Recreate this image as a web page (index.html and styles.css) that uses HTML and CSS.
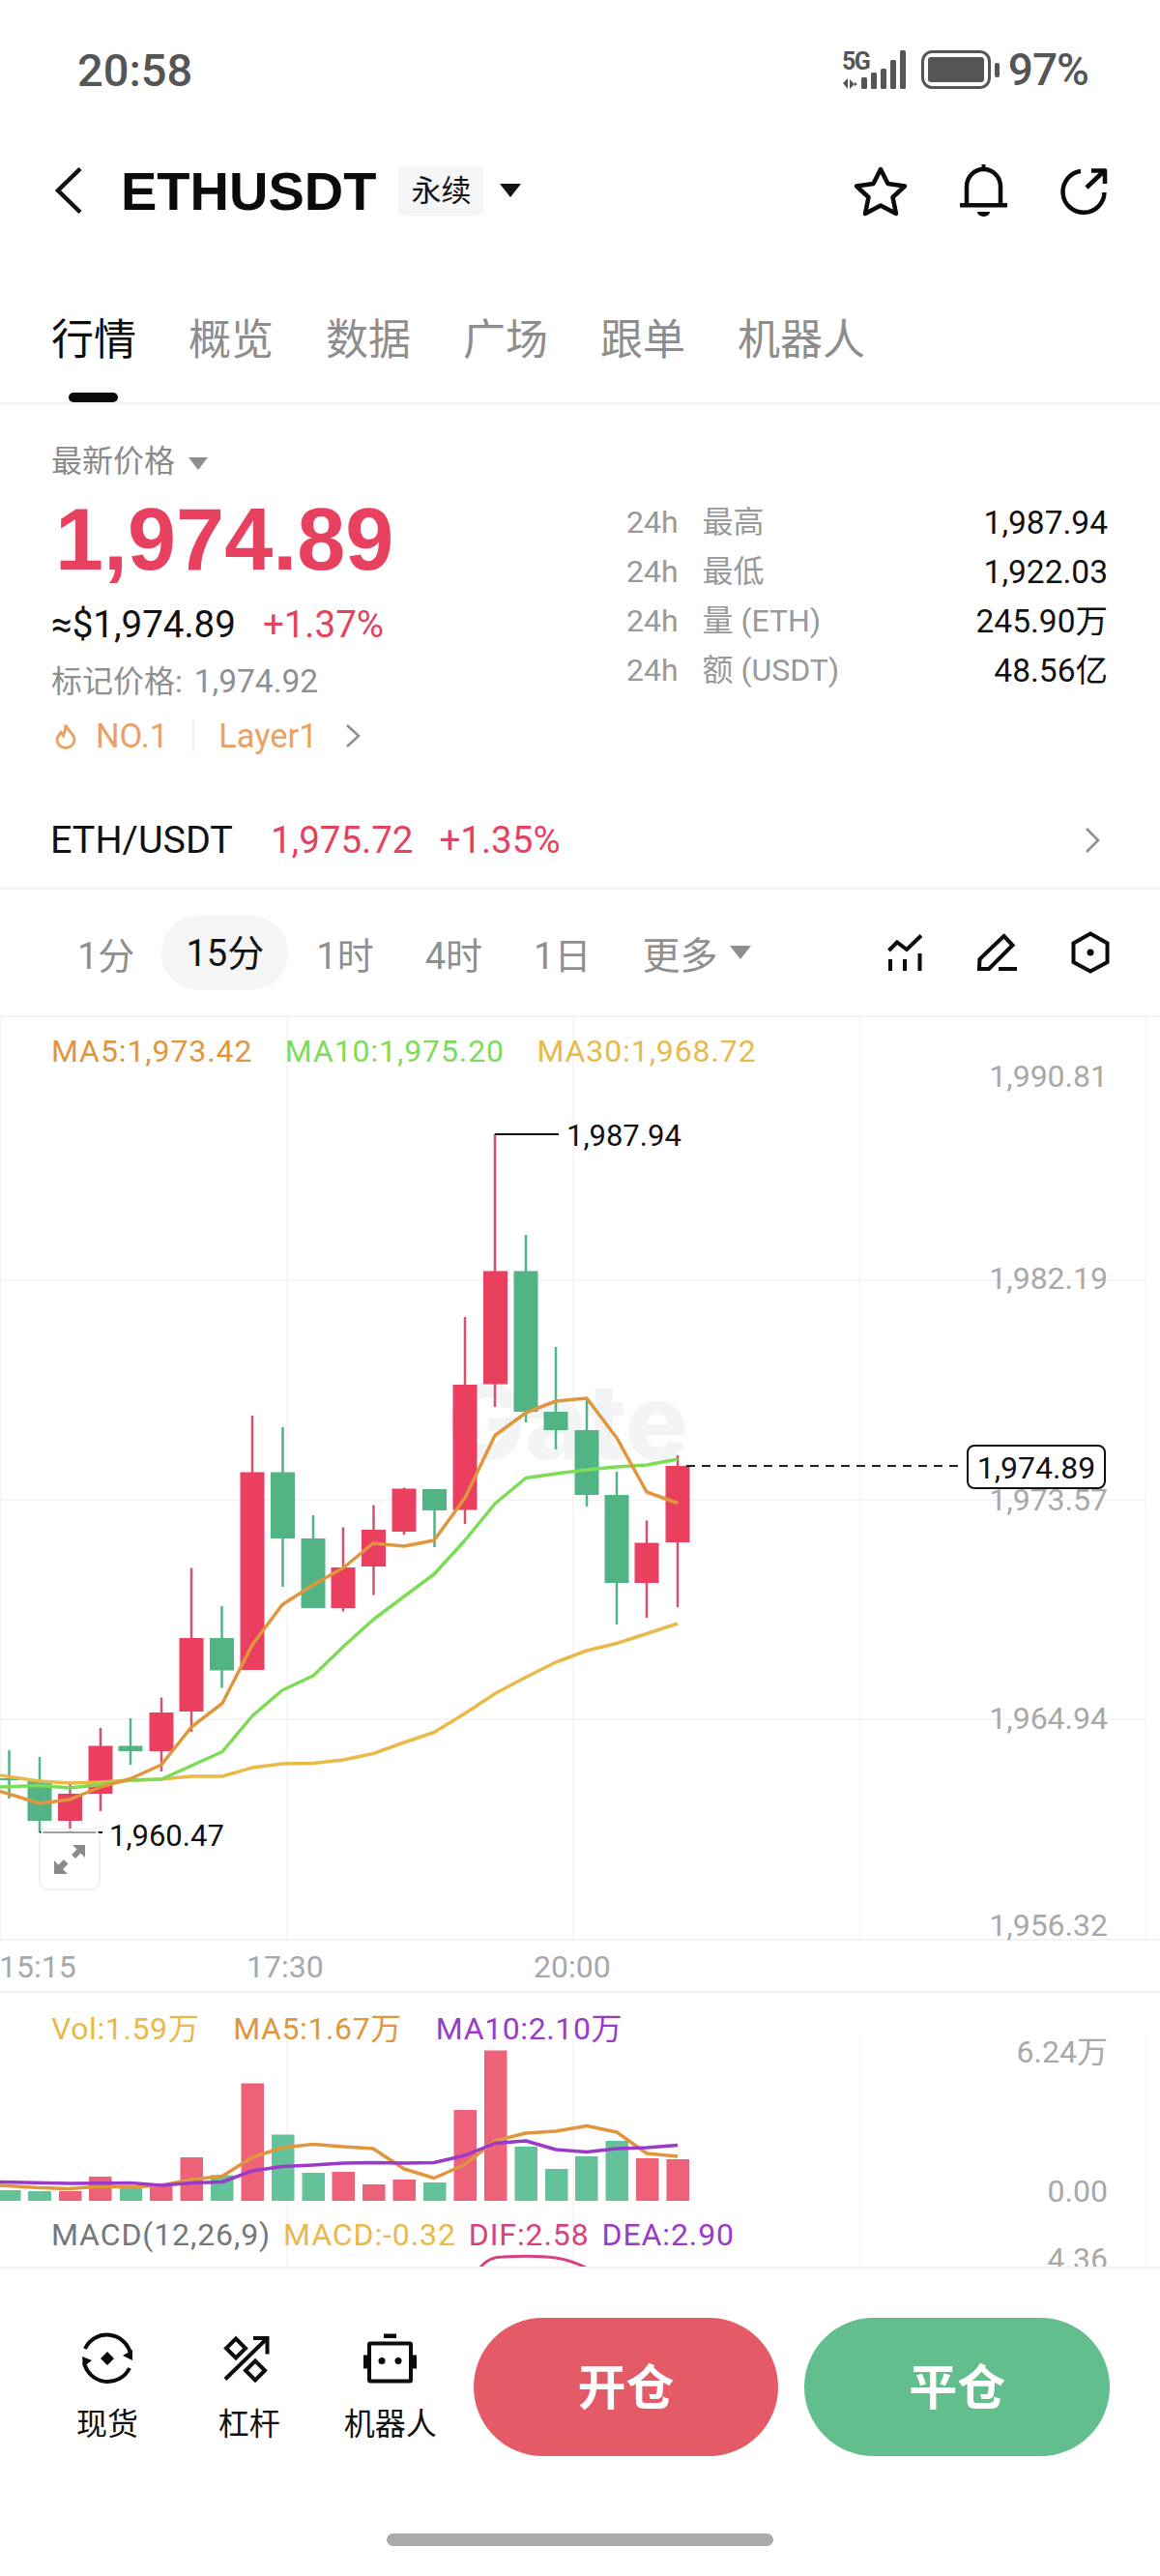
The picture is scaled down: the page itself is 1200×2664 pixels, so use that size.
FILE: index.html
```html
<!DOCTYPE html>
<html lang="zh-CN">
<head>
  <meta charset="UTF-8">
  <title>ETHUSDT 永续</title>
  <meta name="viewport" content="width=device-width, initial-scale=1.0">
  <link rel="stylesheet" href="styles.css">
</head>
<body>

<div class="status-bar">
  <span class="clock">20:58</span>
  <div class="status-icons">
    <svg class="signal" width="66" height="40" viewBox="0 0 66 40">
      <text class="signal-text" x="0" y="20">5G</text>
      <path d="M1 34l5-5v11M8 30v10l5-5zM13 33l3 2-3 2z"/>
      <rect x="20" y="28" width="6" height="12" rx="1.5"/>
      <rect x="30" y="23" width="6" height="17" rx="1.5"/>
      <rect x="40" y="19" width="6" height="21" rx="1.5"/>
      <rect x="50" y="10" width="6" height="30" rx="1.5"/>
      <rect x="60" y="0" width="6" height="40" rx="1.5"/>
    </svg>
    <svg class="battery" width="81" height="40" viewBox="0 0 81 40">
      <rect class="battery-shell" x="1.5" y="1.5" width="69" height="37" rx="10"/>
      <rect x="7" y="7" width="58" height="26" rx="3"/>
      <rect x="76" y="13" width="5" height="15" rx="2"/>
    </svg>
    <span class="battery-pct">97%</span>
  </div>
</div>

<div class="top-bar">
  <svg class="back" width="28" height="48" viewBox="0 0 28 48"><path d="M26 1.500L3 24l23 22.500"/></svg>
  <span class="symbol">ETHUSDT</span>
  <span class="badge">永续</span>
  <span class="caret caret-dark"></span>
  <div class="top-actions">
    <svg class="line-icon" width="54" height="51" viewBox="0 0 54 51"><path d="M27 3l7.500 15L52 20.500 39.500 32 43 49 27 40.500 11 49l3.500-17L2 20.500 19.500 18z"/></svg>
    <svg class="line-icon bell" width="49" height="54" viewBox="0 0 49 54">
      <path d="M7 42V23a17.500 18 0 0 1 35 0v19"/>
      <rect class="solid" x="0" y="40" width="49" height="4.500"/>
      <rect class="solid" x="22.500" y="0" width="4" height="6"/>
      <path class="solid" d="M18 49h13a6.500 5 0 0 1-13 0z"/>
    </svg>
    <svg class="line-icon share" width="48" height="47" viewBox="0 0 48 47">
      <path d="M21 3A21.500 21.500 0 1 0 45.500 25"/>
      <path d="M27 20L45 3M32 2.500h14V16"/>
    </svg>
  </div>
</div>

<div class="tabs">
  <span class="tab tab-active">行情</span>
  <span class="tab">概览</span>
  <span class="tab">数据</span>
  <span class="tab">广场</span>
  <span class="tab">跟单</span>
  <span class="tab">机器人</span>
  <span class="tab-marker"></span>
</div>

<div class="price-panel">
  <div class="price-left">
    <div class="price-label">最新价格 <span class="caret caret-grey"></span></div>
    <div class="last-price">1,974.89</div>
    <div class="fiat-row"><span class="fiat">≈$1,974.89</span><span class="red">+1.37%</span></div>
    <div class="mark-price">标记价格:<span class="mark-value">1,974.92</span></div>
    <div class="tag-row">
      <svg class="flame" width="22" height="27" viewBox="0 0 22 27"><path d="M11 1.500c1 5.500 9 9 9 15.500a9 8.500 0 0 1-18 0c0-3.500 2.500-4.500 4-7.500 1 1 2 2 2.500 3 1.500-3 2.500-6.500 2.500-11z"/></svg>
      <span>NO.1</span>
      <span class="tag-divider"></span>
      <span>Layer1</span>
      <svg class="chevron tag-chevron" width="16" height="24" viewBox="0 0 16 24"><path d="M2 1l12 11L2 23"/></svg>
    </div>
  </div>
  <div class="stats">
    <div class="stat"><span class="stat-range">24h</span><span class="stat-name">最高</span><span class="stat-value">1,987.94</span></div>
    <div class="stat"><span class="stat-range">24h</span><span class="stat-name">最低</span><span class="stat-value">1,922.03</span></div>
    <div class="stat"><span class="stat-range">24h</span><span class="stat-name">量 (ETH)</span><span class="stat-value">245.90万</span></div>
    <div class="stat"><span class="stat-range">24h</span><span class="stat-name">额 (USDT)</span><span class="stat-value">48.56亿</span></div>
  </div>
</div>

<div class="pair-row">
  <span class="pair-name">ETH/USDT</span>
  <span class="red pair-price">1,975.72</span>
  <span class="red pair-change">+1.35%</span>
  <svg class="chevron pair-chevron" width="16" height="26" viewBox="0 0 16 26"><path d="M2 1l12 12L2 25"/></svg>
</div>

<div class="period-row">
  <span class="period">1分</span>
  <span class="period period-active">15分</span>
  <span class="period">1时</span>
  <span class="period">4时</span>
  <span class="period">1日</span>
  <span class="period period-more">更多<span class="caret caret-grey"></span></span>
  <div class="period-tools">
    <svg class="tool-icon" width="36" height="38" viewBox="0 0 36 38"><path d="M1.500 17L10 8.500 20 16 35 1.500M3 26v12M18 26v12M33.500 20v18"/></svg>
    <svg class="tool-icon" width="41" height="38" viewBox="0 0 41 38"><path d="M27.500 2l9 9.500L12 36H2l.5-10zM22 36h19"/></svg>
    <svg class="tool-icon" width="38" height="42" viewBox="0 0 38 42"><path d="M19 1.500l17.500 10V31L19 40.500 1.500 31V11.500z"/><circle class="solid" cx="19" cy="21" r="3.500"/></svg>
  </div>
</div>

<!-- main candle pane, svg coordinates are page coordinates -->
<div class="pane pane-main">
  <svg class="pane-svg" width="1200" height="953" viewBox="0 1053 1200 953">
    <g class="grid">
      <path d="M0 1325H1185M0 1552.500H1185M0 1779H1185M.5 1053V2006M297 1053V2006M593 1053V2006M889.500 1053V2006M1185.500 1053V2006"/>
    </g>
    <text class="watermark" x="462" y="1510">Gate</text>

    <g class="fall">
      <path class="wick" d="M9.500 1811V1861M41 1818V1896M135 1778V1826M229.500 1662V1746.500M292.500 1477V1642M324 1568V1600M449.500 1541V1601M544 1278V1472M575 1394V1500M607 1446V1559M638 1523V1681"/>
      <rect x="0" y="1840" width="22" height="2"/>
      <rect x="28.500" y="1843" width="25" height="41"/>
      <rect x="122.500" y="1806.500" width="25" height="5.500"/>
      <rect x="217" y="1695" width="25" height="33.500"/>
      <rect x="280" y="1523.500" width="25" height="68.500"/>
      <rect x="311.500" y="1592" width="25" height="72"/>
      <rect x="437" y="1541" width="25" height="22"/>
      <rect x="531.500" y="1315.500" width="25" height="145.500"/>
      <rect x="562.500" y="1461" width="25" height="19"/>
      <rect x="594.500" y="1480" width="25" height="67"/>
      <rect x="625.500" y="1547" width="25" height="91"/>
    </g>
    <g class="rise">
      <path class="wick" d="M72.500 1846V1895M104 1788V1874M167 1756.500V1833M198 1622.500V1792M261 1465V1728M355 1580.500V1667.500M386.500 1557.500V1650.500M418 1539.500V1588M481 1363V1577M512 1173.500V1456M669 1573.500V1674M701 1506V1663"/>
      <rect x="60" y="1856" width="25" height="28"/>
      <rect x="91.500" y="1806.500" width="25" height="49.500"/>
      <rect x="154.500" y="1772" width="25" height="40"/>
      <rect x="185.500" y="1695" width="25" height="76"/>
      <rect x="248.500" y="1523.500" width="25" height="204.500"/>
      <rect x="342.500" y="1622" width="25" height="42"/>
      <rect x="374" y="1583" width="25" height="38"/>
      <rect x="405.500" y="1540.500" width="25" height="44.500"/>
      <rect x="468.500" y="1433" width="25" height="129.500"/>
      <rect x="500" y="1315.500" width="25" height="117"/>
      <rect x="656.500" y="1596.500" width="25" height="41.500"/>
      <rect x="688.500" y="1517" width="25" height="79"/>
    </g>

    <polyline class="ma ma30" points="0,1837 41,1843 72,1845 104,1844 135,1842 167,1841 198,1838 230,1838 261,1829 292,1825 324,1824.500 355,1821 386,1814.500 418,1803 449,1792.500 481,1773 512,1752.500 544,1735.500 575,1720 607,1708 638,1700.500 669,1690.500 701,1680"/>
    <polyline class="ma ma10" points="0,1849 41,1847.500 72,1850 104,1846.500 135,1842 167,1841 198,1827 230,1812.500 261,1775.500 292,1749 324,1734 355,1704 386,1676 418,1652 449,1629 481,1594 512,1556 544,1529.500 575,1525 607,1521 638,1518 669,1516 701,1510"/>
    <polyline class="ma ma5" points="0,1853.500 41,1866 72,1862 104,1849 135,1840.500 167,1826 198,1787 230,1762.500 261,1702 292,1660.500 324,1640 355,1622.500 386,1597 418,1600 449,1594 481,1550 512,1485.500 544,1462 575,1450 607,1447 638,1488 669,1544 701,1555.500"/>

    <path class="marker-line" d="M512 1174H578M41 1896H106"/>
    <text class="mark-text" x="586" y="1186">1,987.94</text>
    <text class="mark-text" x="113" y="1910">1,960.47</text>

    <path class="last-line" d="M710 1517H997"/>

    <g class="axis">
      <text x="1146" y="1125">1,990.81</text>
      <text x="1146" y="1334">1,982.19</text>
      <text x="1146" y="1563">1,973.57</text>
      <text x="1146" y="1789">1,964.94</text>
      <text x="1146" y="2003">1,956.32</text>
    </g>
  </svg>

  <div class="legend legend-ma">
    <span class="c-ma5">MA5:1,973.42</span>
    <span class="c-ma10">MA10:1,975.20</span>
    <span class="c-ma30">MA30:1,968.72</span>
  </div>

  <span class="last-tag">1,974.89</span>

  <span class="expand">
    <svg width="32" height="30" viewBox="0 0 32 30"><path d="M19 0h13v13l-4.500-4.500L22 14l-4-4 5.500-5.500zM0 30V16l4.500 4.500L10 15l4.500 4.500L9 25l5 5z"/></svg>
  </span>
</div>

<div class="time-axis">
  <svg width="1200" height="52" viewBox="0 0 1200 52">
    <g class="axis axis-time">
      <text x="-1" y="38">15:15</text>
      <text x="255" y="38">17:30</text>
      <text x="552" y="38">20:00</text>
    </g>
  </svg>
</div>

<!-- volume and macd panes -->
<div class="pane pane-lower">
  <svg class="pane-svg" width="1200" height="283" viewBox="0 2062 1200 283">
    <g class="grid">
      <path d="M297 2110V2345M593 2110V2345M889.500 2110V2345M1185.500 2110V2345"/>
    </g>
    <g class="vol-fall">
      <rect x="-3" y="2266" width="24.500" height="11"/>
      <rect x="29" y="2267" width="24" height="10"/>
      <rect x="124" y="2261" width="23" height="16"/>
      <rect x="218" y="2250.500" width="23.500" height="26.500"/>
      <rect x="281" y="2208.500" width="23.500" height="68.500"/>
      <rect x="312.500" y="2248" width="23.500" height="29"/>
      <rect x="438" y="2258" width="23.500" height="19"/>
      <rect x="532.500" y="2221" width="23.500" height="56"/>
      <rect x="564" y="2244" width="23.500" height="33"/>
      <rect x="595" y="2231" width="23.500" height="46"/>
      <rect x="626.500" y="2215" width="23.500" height="62"/>
    </g>
    <g class="vol-rise">
      <rect x="61" y="2267" width="23.500" height="10"/>
      <rect x="92" y="2252" width="23.500" height="25"/>
      <rect x="155" y="2262" width="23.500" height="15"/>
      <rect x="186.500" y="2232" width="23.500" height="45"/>
      <rect x="249.500" y="2155.500" width="23.500" height="121.500"/>
      <rect x="343.500" y="2247" width="23.500" height="30"/>
      <rect x="375" y="2260" width="23.500" height="17"/>
      <rect x="406.500" y="2255" width="23.500" height="22"/>
      <rect x="469.500" y="2183" width="23.500" height="94"/>
      <rect x="501" y="2121.500" width="23.500" height="155.500"/>
      <rect x="658" y="2233" width="23.500" height="44"/>
      <rect x="689.500" y="2234" width="23.500" height="43"/>
    </g>
    <polyline class="ma c-line-ma5" points="0,2261 41,2263.500 72,2264.500 104,2262 135,2263 167,2261 198,2255 230,2251.500 261,2232 292,2222 324,2218.500 355,2221 386,2223 418,2244 449,2253.500 481,2239.500 512,2215 544,2207 575,2205 607,2199.500 638,2206 669,2228 701,2231"/>
    <polyline class="ma c-line-ma10" points="0,2257.500 72,2259 135,2258.500 167,2261 198,2258.500 230,2257.500 261,2246 292,2241.500 324,2240 355,2238 386,2237.500 418,2238 449,2237.500 481,2230 512,2217.500 544,2215 575,2224 607,2226.500 638,2223 669,2222 701,2219.500"/>
    <path class="macd-curve" d="M497 2346C503 2338 510 2335 520 2335C540 2334 560 2334 575 2336C588 2338 596 2341 606 2346"/>
    <g class="axis">
      <text x="1146" y="2134">6.24万</text>
      <text x="1146" y="2278">0.00</text>
      <text x="1146" y="2348">4.36</text>
    </g>
  </svg>
  <div class="legend legend-vol">
    <span class="c-ma30">Vol:1.59万</span>
    <span class="c-ma5">MA5:1.67万</span>
    <span class="c-purple">MA10:2.10万</span>
  </div>
  <div class="legend legend-macd">
    <span class="c-grey">MACD(12,26,9)</span>
    <span class="c-ma30">MACD:-0.32</span>
    <span class="c-pink">DIF:2.58</span>
    <span class="c-purple">DEA:2.90</span>
  </div>
</div>

<div class="action-bar">
  <div class="shortcut shortcut-spot">
    <svg class="tool-icon" width="54" height="54" viewBox="0 0 54 54">
      <path d="M4 17A25 25 0 0 1 51 22M50 37A25 25 0 0 1 3 31"/>
      <path class="solid" d="M53 29l-10-5 10-6zM1 25l10 4-9 7zM27 20l7 7-7 7-7-7z"/>
    </svg>
    <span>现货</span>
  </div>
  <div class="shortcut shortcut-lever">
    <svg class="tool-icon lever-icon" width="48" height="47" viewBox="0 0 48 47">
      <path d="M2 45L45 3M31 2.500h14.500V19M13 3l10 10-10 10L3 13zM33 26l10 10-10 10-10-10z"/>
    </svg>
    <span>杠杆</span>
  </div>
  <div class="shortcut shortcut-bot">
    <svg class="tool-icon" width="55" height="51" viewBox="0 0 55 51">
      <rect class="solid" x="21" y="0" width="13" height="4.500"/>
      <rect x="6" y="10" width="43" height="39" rx="1"/>
      <rect class="solid" x="0" y="22" width="4" height="14"/>
      <rect class="solid" x="51" y="22" width="4" height="14"/>
      <circle class="solid" cx="19" cy="28" r="3.500"/>
      <circle class="solid" cx="36" cy="28" r="3.500"/>
    </svg>
    <span>机器人</span>
  </div>
  <button class="trade-btn btn-open" type="button">开仓</button>
  <button class="trade-btn btn-close" type="button">平仓</button>
</div>

<div class="home-row"><span class="home-bar"></span></div>

</body>
</html>
```

FILE: styles.css
```css
* {
  box-sizing: border-box;
}
body {
  margin: 0;
  width: 1200px;
  height: 2664px;
  overflow: hidden;
  background: #fff;
  font-family: Roboto, "Noto Sans CJK SC", sans-serif;
  color: #111;
}
svg {
  display: block;
  flex: none;
  overflow: visible;
}
.red {
  color: #e5425f;
}

/* status bar */
.status-bar {
  height: 144px;
  display: flex;
  align-items: center;
  padding: 0 74px 0 80px;
}
.clock {
  font-size: 47px;
  font-weight: 500;
  color: #555;
}
.status-icons {
  margin-left: auto;
  display: flex;
  align-items: center;
  color: #555;
}
.signal {
  fill: #555;
  margin-right: 16px;
}
.signal-text {
  font-size: 25px;
  font-weight: 700;
  letter-spacing: -1.5px;
}
.battery {
  fill: #555;
  margin-right: 9px;
}
.battery-shell {
  fill: none;
  stroke: #555;
  stroke-width: 3;
}
.battery-pct {
  font-size: 46px;
  font-weight: 500;
  letter-spacing: -1px;
}

/* header */
.top-bar {
  height: 106px;
  display: flex;
  align-items: center;
  padding: 0 55px 0 57px;
}
.back {
  fill: none;
  stroke: #111;
  stroke-width: 4.5;
}
.symbol {
  margin-left: 40px;
  font-family: "Liberation Sans", sans-serif;
  font-size: 56px;
  font-weight: 700;
  color: #0b0b0b;
}
.badge {
  margin-left: 23px;
  width: 88px;
  height: 52px;
  line-height: 54px;
  text-align: center;
  background: #f6f6f6;
  border-radius: 6px;
  font-size: 31px;
}
.caret {
  display: inline-block;
  width: 0;
  height: 0;
  border-left: 11px solid transparent;
  border-right: 11px solid transparent;
  border-top: 14px solid #111;
}
.caret-dark {
  margin-left: 17px;
}
.caret-grey {
  border-top-color: #8e8e8e;
}
.top-actions {
  margin-left: auto;
  display: flex;
  align-items: center;
  gap: 55px;
}
.line-icon {
  fill: none;
  stroke: #0b0b0b;
  stroke-width: 4.5;
  stroke-linejoin: round;
}
.solid {
  fill: #0b0b0b;
  stroke: none;
}

/* tabs */
.tabs {
  position: relative;
  height: 168px;
  padding: 73px 0 0 53px;
  display: flex;
  gap: 54px;
  border-bottom: 2px solid #f2f2f2;
}
.tab {
  font-size: 44px;
  line-height: 58px;
  height: 58px;
  color: #8d8d8d;
}
.tab-active {
  color: #0b0b0b;
}
.tab-marker {
  position: absolute;
  left: 71px;
  bottom: 0;
  width: 51px;
  height: 10px;
  border-radius: 5px;
  background: #0b0b0b;
}

/* price block */
.price-panel {
  height: 401px;
  display: flex;
  padding-left: 53px;
}
.price-left {
  width: 595px;
  padding-top: 39px;
}
.price-label {
  height: 40px;
  line-height: 40px;
  font-size: 32px;
  color: #8a8a8a;
}
.price-label .caret {
  margin-left: 6px;
  vertical-align: 2px;
  border-left-width: 10px;
  border-right-width: 10px;
  border-top-width: 13px;
}
.last-price {
  margin: 11px 0 -1px 4px;
  height: 100px;
  line-height: 100px;
  font-family: "Liberation Sans", sans-serif;
  font-size: 90px;
  font-weight: 700;
  color: #e8415f;
}
.fiat-row {
  margin-top: 17px;
  height: 44px;
  line-height: 44px;
  font-size: 38.5px;
  display: flex;
  gap: 28px;
}
.mark-price {
  margin-top: 17px;
  height: 40px;
  line-height: 40px;
  font-size: 32px;
  color: #8f8f8f;
}
.mark-value {
  margin-left: 12px;
  font-size: 33.5px;
}
.tag-row {
  margin-top: 18px;
  height: 36px;
  display: flex;
  align-items: center;
  font-size: 34.5px;
  color: #e8a265;
}
.flame {
  margin: 0 20px 0 4px;
  fill: none;
  stroke: #e8a265;
  stroke-width: 3;
}
.tag-divider {
  width: 2px;
  height: 33px;
  margin: 0 25px;
  background: #f0f0f0;
}
.chevron {
  fill: none;
  stroke: #8d8d8d;
  stroke-width: 2.5;
}
.tag-chevron {
  margin-left: 28px;
}
.stats {
  width: 498px;
  padding-top: 97px;
}
.stat {
  height: 51px;
  line-height: 51px;
  display: flex;
  font-size: 32px;
  color: #999;
}
.stat-name {
  margin-left: 25px;
}
.stat-value {
  margin-left: auto;
  font-size: 33.5px;
  color: #111;
}

/* spot pair link */
.pair-row {
  height: 101px;
  display: flex;
  align-items: center;
  padding: 0 62px 0 52px;
  border-bottom: 2px solid #f2f2f2;
  font-size: 38.5px;
}
.pair-name {
  font-size: 39.5px;
}
.pair-price {
  margin-left: 39px;
}
.pair-change {
  margin-left: 27px;
}
.pair-chevron {
  margin-left: auto;
}

/* periods */
.period-row {
  height: 132px;
  display: flex;
  align-items: center;
  padding: 0 53px 0 54px;
  border-bottom: 2px solid #f2f2f2;
}
.period {
  font-size: 38px;
  color: #8f8f8f;
  margin-right: 53px;
  white-space: nowrap;
}
.period:first-child {
  margin-left: 26px;
  margin-right: 28px;
}
.period-active {
  width: 131px;
  height: 77px;
  line-height: 79px;
  text-align: center;
  margin-right: 29px;
  background: #f5f5f5;
  border-radius: 38px;
  color: #111;
}
.period-more {
  display: flex;
  align-items: center;
  margin-right: 0;
  font-size: 39px;
}
.period-more .caret {
  margin-left: 13px;
}
.period-tools {
  margin-left: auto;
  display: flex;
  align-items: center;
  gap: 57px;
}
.tool-icon {
  fill: none;
  stroke: #0b0b0b;
  stroke-width: 4;
}

/* chart panes */
.pane {
  position: relative;
}
.pane-main {
  height: 953px;
}
.pane-lower {
  height: 283px;
}
.grid {
  fill: none;
  stroke: #f3f3f3;
  stroke-width: 1.5;
}
.watermark {
  font-family: Inter, sans-serif;
  font-size: 108px;
  font-weight: 800;
  fill: #f2f4f5;
}
.wick {
  fill: none;
  stroke-width: 2.5;
}
.fall {
  fill: #52b484;
}
.fall .wick {
  stroke: #52b484;
}
.rise {
  fill: #ea3f5e;
}
.rise .wick {
  stroke: #d9506a;
}
.ma {
  fill: none;
  stroke-width: 3.5;
  stroke-linejoin: round;
}
.ma5,
.c-line-ma5 {
  stroke: #e0963c;
}
.ma10 {
  stroke: #7ddc55;
}
.ma30 {
  stroke: #e9b949;
}
.c-line-ma10 {
  stroke: #9b3ac9;
}
.marker-line {
  fill: none;
  stroke: #111;
  stroke-width: 2;
}
.mark-text {
  font-size: 31px;
  fill: #111;
}
.last-line {
  fill: none;
  stroke: #222;
  stroke-width: 2;
  stroke-dasharray: 9 7;
}
.axis text {
  font-size: 32px;
  fill: #a8a8a8;
  text-anchor: end;
}
.axis-time text {
  text-anchor: start;
}
.legend {
  position: absolute;
  left: 53px;
  display: flex;
  font-size: 32px;
  line-height: 40px;
  white-space: nowrap;
}
.legend-ma {
  top: 15px;
  gap: 33.5px;
  letter-spacing: .9px;
}
.legend-vol {
  top: 17px;
  gap: 35px;
  letter-spacing: .6px;
}
.legend-macd {
  top: 230px;
  gap: 13px;
  letter-spacing: .9px;
}
.c-ma5 {
  color: #e0963c;
}
.c-ma10 {
  color: #7ddc55;
}
.c-ma30 {
  color: #e9b949;
}
.c-purple {
  color: #9b3ac9;
}
.c-pink {
  color: #d8407f;
}
.c-grey {
  color: #777;
}
.last-tag {
  position: absolute;
  left: 1000px;
  top: 442px;
  width: 144px;
  height: 46px;
  line-height: 44px;
  text-align: center;
  font-size: 32px;
  background: #fff;
  border: 2px solid #111;
  border-radius: 8px;
}
.expand {
  position: absolute;
  left: 40px;
  top: 839px;
  width: 64px;
  height: 64px;
  display: flex;
  align-items: center;
  justify-content: center;
  background: rgba(255, 255, 255, .6);
  border: 2px solid #f2f2f2;
  border-radius: 10px;
  fill: #8a8a8a;
}
.time-axis {
  height: 56px;
  border-top: 2px solid #f3f3f3;
  border-bottom: 2px solid #f3f3f3;
}
.vol-fall {
  fill: #63c29a;
}
.vol-rise {
  fill: #ee6279;
}
.macd-curve {
  fill: none;
  stroke: #d8407f;
  stroke-width: 3;
}

/* bottom actions */
.action-bar {
  height: 276px;
  padding: 51px 52px 0 0;
  display: flex;
  align-items: flex-start;
  background: #fff;
  border-top: 2px solid #f3f3f3;
  position: relative;
}
.shortcut {
  display: flex;
  flex-direction: column;
  align-items: center;
  font-size: 32px;
  line-height: 40px;
  color: #111;
}
.shortcut svg {
  height: 54px;
  margin-bottom: 21px;
}
.lever-icon {
  position: relative;
  left: -3px;
}
.shortcut-spot {
  width: 100px;
  margin: 15px 0 0 61px;
}
.shortcut-lever {
  width: 100px;
  margin: 15px 0 0 47px;
}
.shortcut-bot {
  width: 100px;
  margin: 15px 0 0 46px;
}
.trade-btn {
  width: 316px;
  height: 143px;
  padding: 0 0 7px;
  border: 0;
  border-radius: 72px;
  color: #fff;
  font-family: "Noto Sans CJK SC", sans-serif;
  font-size: 50px;
  font-weight: 700;
}
.btn-open {
  margin-left: 36px;
  background: #e45b67;
}
.btn-close {
  margin-left: 27px;
  background: #62bf8d;
}
.home-row {
  display: flex;
  justify-content: center;
}
.home-bar {
  width: 400px;
  height: 13px;
  margin-top: 0;
  border-radius: 7px;
  background: #aaa;
}
```
